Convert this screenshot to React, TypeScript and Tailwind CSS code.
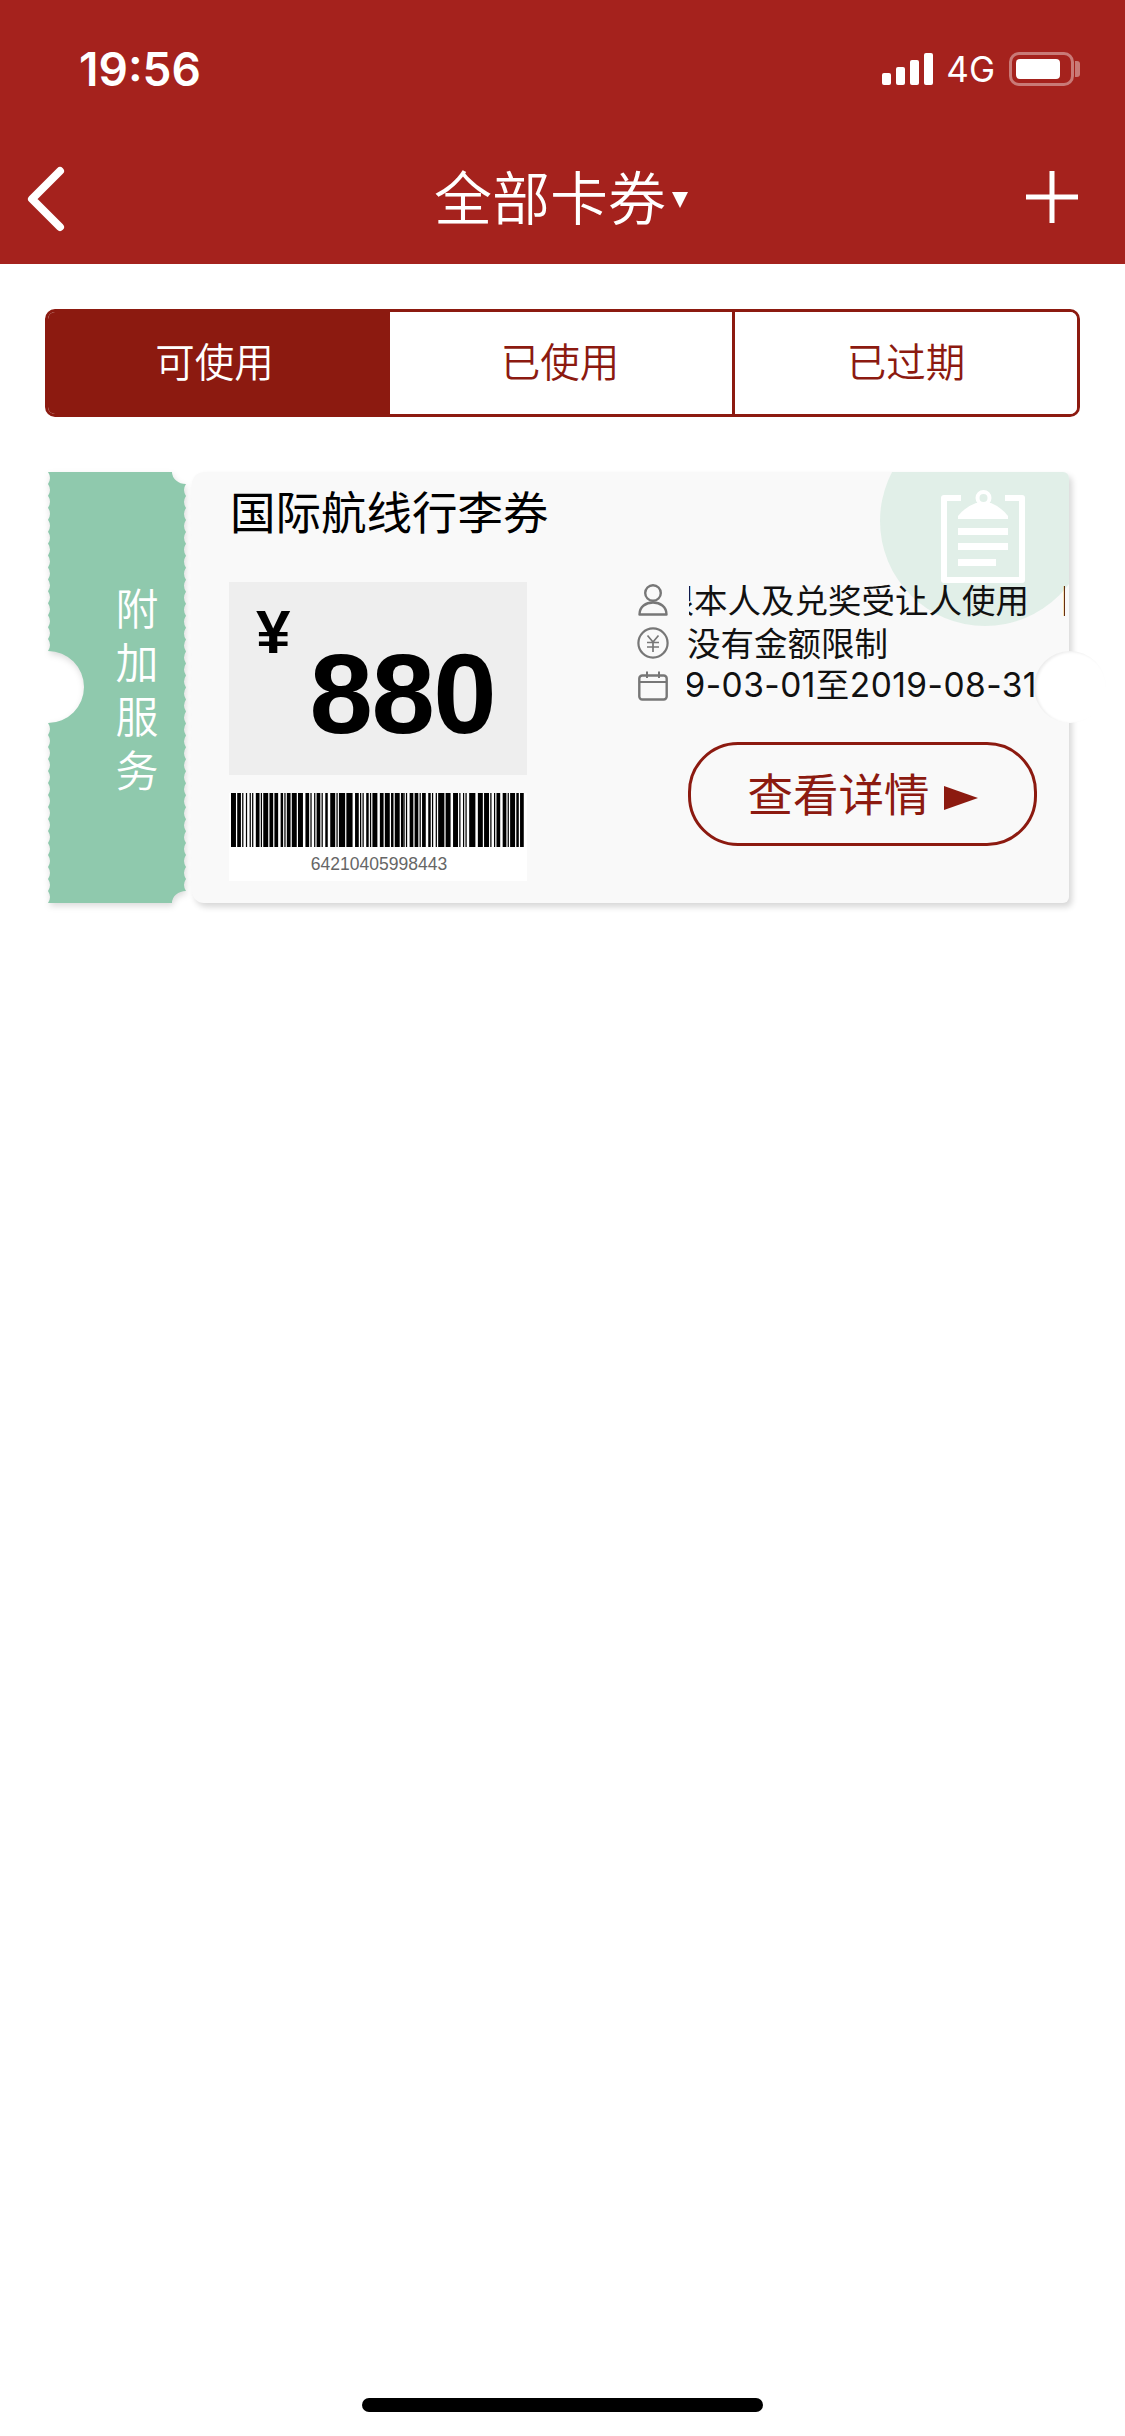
import React from "react";

const CJK = "font-['Noto_Sans_CJK_SC','Noto_Sans',sans-serif]";
const LAT = "font-['Inter','Noto_Sans_CJK_SC',sans-serif]";

function scallop(x: number, y0: number, y1: number, dir: number, depth: number) {
  const period = 12;
  const n = Math.max(1, Math.round(Math.abs(y1 - y0) / period));
  const step = (y1 - y0) / n;
  let d = "";
  for (let i = 0; i < n; i++) {
    const a = y0 + step * i;
    d += ` Q ${x + dir * depth} ${a + step / 2} ${x} ${a + step}`;
  }
  return d;
}

const STUB_W = 138;
const STUB_H = 431;
const stubPath =
  `M 0 0 L 124 0 A 14 12 0 0 0 ${STUB_W} 12` +
  scallop(STUB_W, 12, STUB_H - 12, -1, 4) +
  ` A 14 12 0 0 0 124 ${STUB_H} L 0 ${STUB_H}` +
  scallop(0, STUB_H, 251, 1, 4) +
  ` A 36 36 0 0 0 0 179` +
  scallop(0, 179, 0, 1, 4) +
  " Z";

const barcodeGroups = [
  [4, 1, 3, 1, 1, 2, 1, 2, 1, 1, 1, 2],
  [3, 1, 1, 1, 4, 1, 3, 1, 3, 2],
  [2, 1, 1, 1, 3, 1, 4, 1, 4, 2],
  [3, 1, 1, 2, 1, 1, 3, 1, 1, 2, 2, 2],
  [4, 1, 1, 1, 5, 1, 5, 2],
  [3, 1, 1, 1, 1, 2, 2, 1, 1, 1, 4, 2],
  [3, 1, 4, 1, 2, 1, 4, 1, 2],
  [1, 1, 1, 2, 3, 1, 3, 1, 1, 1, 3, 2],
  [2, 1, 1, 2, 1, 1, 5, 1, 4, 2],
  [4, 1, 1, 2, 1, 1, 1, 2, 5, 2],
  [4, 1, 4, 1, 1, 2, 1, 1, 3, 2],
  [3, 1, 1, 1, 4, 1, 2, 1, 3, 1],
];
const total = barcodeGroups.reduce((s, g) => s + g.reduce((a, b) => a + b, 0), 0);
const MOD = 294 / total;
const bars: { x: number; w: number }[] = (() => {
  const out: { x: number; w: number }[] = [];
  let x = 0;
  barcodeGroups.forEach((g) => {
    g.forEach((c, i) => {
      const w = c * MOD;
      if (i % 2 === 0) out.push({ x, w });
      x += w;
    });
  });
  return out;
})();

function Barcode() {
  return (
    <svg width="294" height="54" viewBox="0 0 294 54" className="block">
      {bars.map((b, i) => (
        <rect key={i} x={b.x} y={0} width={b.w} height={54} fill="#000" />
      ))}
    </svg>
  );
}

function PersonIcon() {
  return (
    <svg width="30" height="32" viewBox="0 0 30 32" fill="none" stroke="#777" strokeWidth="2.4">
      <circle cx="15" cy="9" r="7.8" />
      <path d="M1.5 30.5 C1.5 22.5 8 18.5 15 18.5 C22 18.5 28.5 22.5 28.5 30.5 Z" strokeLinejoin="round" />
    </svg>
  );
}
function YenIcon() {
  return (
    <svg width="32" height="32" viewBox="0 0 32 32" fill="none" stroke="#777" strokeWidth="2.2">
      <circle cx="16" cy="16" r="14.6" />
      <path d="M10.5 8.5 L16 15 L21.5 8.5 M10 15.5 H22 M10 20 H22 M16 15 V25" strokeWidth="1.7" />
    </svg>
  );
}
function CalendarIcon() {
  return (
    <svg width="30" height="30" viewBox="0 0 30 30" fill="none" stroke="#777" strokeWidth="2.4">
      <rect x="1.3" y="4.5" width="27.4" height="24" rx="3" />
      <path d="M1.5 11 H28.5 M9 0.5 V7 M21 0.5 V7" strokeWidth="2" />
    </svg>
  );
}
function ClipboardIcon() {
  return (
    <svg width="84" height="93" viewBox="0 0 84 93" fill="none">
      <path d="M20 8 H3 V90 H81 V8 H64" stroke="#fff" strokeWidth="6" strokeLinejoin="round" />
      <circle cx="42.5" cy="8" r="6" stroke="#fff" strokeWidth="4" />
      <path d="M17 29 H67 V26 Q60 17 50 13 H35 Q24 17 17 26 Z" fill="#fff" />
      <rect x="17" y="38" width="50" height="7" fill="#fff" />
      <rect x="17" y="53" width="50" height="7" fill="#fff" />
      <rect x="17" y="69" width="38" height="7" fill="#fff" />
    </svg>
  );
}

function StatusBar() {
  return (
    <div className="flex items-center h-[34px] mt-[52px] pl-[79px] pr-[45px]">
      <span className={`${LAT} text-[46px] leading-[34px] font-semibold text-white`}>19:56</span>
      <div className="ml-auto flex items-end gap-[5px] h-[32px] w-[51px]">
        <span className="w-[9px] h-[12px] bg-white rounded-[2px]" />
        <span className="w-[9px] h-[18px] bg-white rounded-[2px]" />
        <span className="w-[9px] h-[25px] bg-white rounded-[2px]" />
        <span className="w-[9px] h-[32px] bg-white rounded-[2px]" />
      </div>
      <span className={`${LAT} ml-[13px] text-[35px] leading-[34px] text-white`}>4G</span>
      <div className="ml-[14px] flex items-center">
        <div className="w-[65px] h-[34px] rounded-[10px] border-[3px] border-white/40 p-[4px] pr-[11px]">
          <div className="w-full h-full bg-white rounded-[4px]" />
        </div>
        <span className="ml-[1px] w-[5px] h-[16px] bg-white/40 rounded-r-[3px]" />
      </div>
    </div>
  );
}

function NavBar() {
  return (
    <div className="relative flex items-center justify-between h-[68px] mt-[79px] pl-[24px] pr-[46px]">
      <svg width="42" height="66" viewBox="0 0 42 66" fill="none">
        <path d="M36 5 L8 33 L36 61" stroke="#fff" strokeWidth="8" strokeLinecap="round" strokeLinejoin="round" />
      </svg>
      <svg width="54" height="54" viewBox="0 0 54 54" className="-mt-[4px]">
        <rect x="1" y="24.5" width="52" height="5" fill="#fff" />
        <rect x="24.5" y="1" width="5" height="52" fill="#fff" />
      </svg>
      <div className="absolute left-[434px] -top-[4px] flex items-center h-[68px]">
        <span className={`${CJK} text-[58px] leading-[68px] font-[350] text-white`}>全部卡券</span>
        <svg width="16" height="16" viewBox="0 0 16 16" className="ml-[6px] mt-[9px]">
          <path d="M0 0 H16 L8 16 Z" fill="#fff" />
        </svg>
      </div>
    </div>
  );
}

function Tabs() {
  const active = "bg-[#8c1a10] text-white";
  const idle = "bg-white text-[#8c1a10]";
  return (
    <div className={`${CJK} flex h-[108px] ml-[45px] w-[1035px] mt-[45px] rounded-[10px] border-[3px] border-[#8c1a10] overflow-hidden text-[39.5px] leading-[96px] font-[350]`}>
      <div className={`${active} w-[342px] h-[102px] flex items-start justify-center pr-[9px]`}>可使用</div>
      <div className={`${idle} w-[345px] h-[102px] flex items-start justify-center pr-[2px] border-r-[3px] border-[#8c1a10]`}>已使用</div>
      <div className={`${idle} flex-1 h-[102px] flex items-start justify-center`}>已过期</div>
    </div>
  );
}

function Ticket() {
  return (
    <div className="flex ml-[48px] mt-[55px] w-[1022px] h-[431px] gap-[6px]">
      <div className="relative w-[138px] h-[431px] shrink-0">
        <svg
          width="138"
          height="431"
          viewBox="0 0 138 431"
          className="absolute inset-0 overflow-visible drop-shadow-[1px_3px_3px_rgba(0,0,0,0.14)]"
        >
          <path d={stubPath} fill="#8fc9ad" />
        </svg>
        <div className={`${CJK} relative pt-[115px] pl-[67px] text-[43px] leading-[43px] tracking-[11px] font-[350] text-white [writing-mode:vertical-rl]`}>
          附加服务
        </div>
      </div>

      <div className="relative w-[877px] h-[431px] rounded-l-[12px] rounded-r-[6px] bg-[#f9f9f9] shadow-[3px_4px_6px_rgba(0,0,0,0.16)]">
        <div className="absolute inset-0 overflow-hidden rounded-r-[6px] rounded-l-[12px]">
          <div className="absolute left-[688px] top-[-56px] w-[210px] h-[210px] rounded-full bg-[#e1efe8]" />
          <div className="absolute left-[749px] top-[18px]">
            <ClipboardIcon />
          </div>
        </div>

        <div className="relative pl-[37px] pt-[15px]">
          <div className={`${CJK} text-[45.5px] leading-[46px] text-black ml-[1px] h-[46px]`}>国际航线行李券</div>
          <div className="flex mt-[49px]">
            <div className="w-[298px] shrink-0">
              <div className="flex items-start h-[193px] bg-[#eeeeee] pl-[27px] pt-[20px]">
                <span className="font-['Liberation_Sans',sans-serif] font-bold text-[62px] leading-[60px] text-black">¥</span>
                <span className="font-['Liberation_Sans',sans-serif] font-bold text-[114px] leading-[112px] text-black tracking-[-1.5px] ml-[19px] mt-[36px]">880</span>
              </div>
              <div className="mt-[18px] h-[88px] bg-white flex flex-col items-center">
                <Barcode />
                <div className="font-['Liberation_Sans',sans-serif] text-[17.5px] leading-[34px] text-[#666] ml-[2px]">64210405998443</div>
              </div>
            </div>

            <div className="ml-[110px] -mt-[4px]">
              <div className={`${CJK} text-[33.5px] leading-[39px] text-[#111]`}>
                <div className="flex items-center h-[43px]">
                  <div className="w-[32px] flex justify-center"><PersonIcon /></div>
                  <div className="ml-[20px] w-[376px] -mt-[3px] overflow-hidden whitespace-nowrap">
                    <span className="-ml-[62px] inline-block">仅限本人及兑奖受让人使用<span className="ml-[32px]">限</span></span>
                  </div>
                </div>
                <div className="flex items-center h-[43px]">
                  <div className="w-[32px] flex justify-center"><YenIcon /></div>
                  <div className="ml-[18px] w-[378px] -mt-[3px] overflow-hidden whitespace-nowrap">没有金额限制</div>
                </div>
                <div className="flex items-center h-[43px]">
                  <div className="w-[32px] flex justify-center"><CalendarIcon /></div>
                  <div className={`${LAT} ml-[18px] w-[378px] -mt-[1px] overflow-hidden whitespace-nowrap tracking-[0.45px]`}>
                    <span className="-ml-[59px] inline-block">2019-03-01至2019-08-31</span>
                  </div>
                </div>
              </div>
              <div className={`${CJK} ml-[51px] mt-[35px] w-[349px] h-[104px] rounded-[50px] border-[3px] border-[#8c1a10] flex items-center justify-center text-[45.5px] text-[#8c1a10]`}>
                <span className="-mt-[4px]">查看详情</span>
                <svg width="34" height="24" viewBox="0 0 34 24" className="ml-[14px] mt-[8px]">
                  <path d="M0 0 L34 12 L0 24 Z" fill="#8c1a10" />
                </svg>
              </div>
            </div>
          </div>
        </div>

        <div className="absolute left-[842px] top-[179px] w-[72px] h-[72px] rounded-full bg-white shadow-[inset_2px_1px_3px_rgba(0,0,0,0.08)]" />
      </div>
    </div>
  );
}

export default function App() {
  return (
    <div className="flex flex-col w-[1125px] h-[2436px] bg-white overflow-hidden">
      <div className="h-[264px] bg-[#a5221d] shrink-0">
        <StatusBar />
        <NavBar />
      </div>
      <Tabs />
      <Ticket />
      <div className="mt-auto mb-[24px] mx-auto w-[401px] h-[14px] rounded-full bg-black" />
    </div>
  );
}
